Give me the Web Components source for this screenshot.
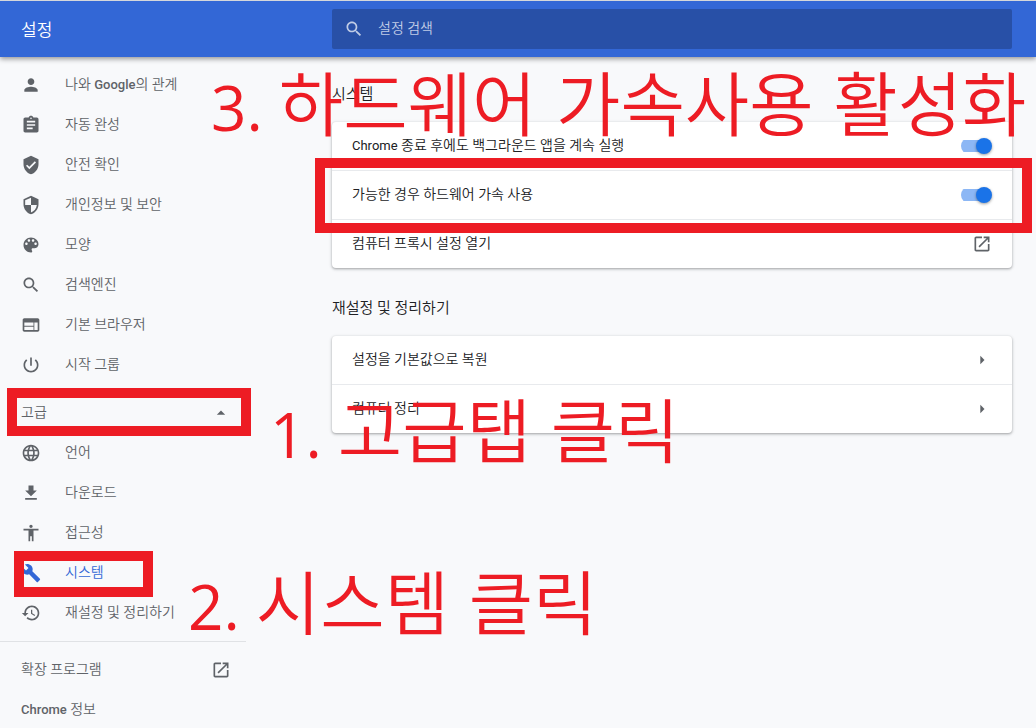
<!DOCTYPE html>
<html lang="ko">
<head>
    <meta charset="UTF-8">
    <title>설정</title>
    <style>
        body {
            margin: 0;
            background-color: #f8f9fb;
            color: #202124;
            font: 350 14px/20px Roboto, "Noto Sans CJK KR", sans-serif;
        }
    </style>
</head>
<body>
    <settings-page></settings-page>

    <script>
        const ICONS = {
            person: 'M12 12c2.21 0 4-1.79 4-4s-1.79-4-4-4-4 1.79-4 4 1.79 4 4 4zm0 2c-2.67 0-8 1.34-8 4v2h16v-2c0-2.66-5.33-4-8-4z',
            autofill: 'M19 3h-4.18C14.4 1.84 13.3 1 12 1c-1.3 0-2.4.84-2.82 2H5c-1.1 0-2 .9-2 2v14c0 1.1.9 2 2 2h14c1.1 0 2-.9 2-2V5c0-1.1-.9-2-2-2zm-7 0c.55 0 1 .45 1 1s-.45 1-1 1-1-.45-1-1 .45-1 1-1zm2 14H7v-2h7v2zm3-4H7v-2h10v2zm0-4H7V7h10v2z',
            safety: 'M12 1L3 5v6c0 5.55 3.84 10.74 9 12 5.16-1.26 9-6.45 9-12V5l-9-4zm-2 16l-4-4 1.41-1.41L10 14.17l6.59-6.59L18 9l-8 8z',
            privacy: 'M12 1L3 5v6c0 5.55 3.84 10.74 9 12 5.16-1.26 9-6.45 9-12V5l-9-4zm0 10.99h7c-.53 4.12-3.28 7.79-7 8.94V12H5V6.3l7-3.11v8.8z',
            palette: 'M12 3c-4.97 0-9 4.03-9 9s4.03 9 9 9c.83 0 1.5-.67 1.5-1.5 0-.39-.15-.74-.39-1.01-.23-.26-.38-.61-.38-.99 0-.83.67-1.5 1.5-1.5H16c2.76 0 5-2.24 5-5 0-4.42-4.03-8-9-8zm-5.5 9c-.83 0-1.5-.67-1.5-1.5S5.67 9 6.5 9 8 9.67 8 10.5 7.33 12 6.5 12zm3-4C8.67 8 8 7.33 8 6.5S8.67 5 9.5 5s1.5.67 1.5 1.5S10.33 8 9.5 8zm5 0c-.83 0-1.5-.67-1.5-1.5S13.67 5 14.5 5s1.5.67 1.5 1.5S15.33 8 14.5 8zm3 4c-.83 0-1.5-.67-1.5-1.5S16.67 9 17.5 9s1.5.67 1.5 1.5-.67 1.5-1.5 1.5z',
            search: 'M15.5 14h-.79l-.28-.27C15.41 12.59 16 11.11 16 9.5 16 5.91 13.09 3 9.5 3S3 5.91 3 9.5 5.91 16 9.5 16c1.61 0 3.09-.59 4.23-1.57l.27.28v.79l5 4.99L20.49 19l-4.99-5zm-6 0C7.01 14 5 11.99 5 9.5S7.01 5 9.5 5 14 7.01 14 9.5 11.99 14 9.5 14z',
            browser: 'M20 4H4c-1.1 0-1.99.9-1.99 2L2 18c0 1.1.9 2 2 2h16c1.1 0 2-.9 2-2V6c0-1.1-.9-2-2-2zm-5 14H4v-4h11v4zm0-5H4V9h11v4zm5 5h-4V9h4v9z',
            power: 'M13 3h-2v10h2V3zm4.83 2.17l-1.42 1.42C17.99 7.86 19 9.81 19 12c0 3.87-3.13 7-7 7s-7-3.13-7-7c0-2.19 1.01-4.14 2.58-5.42L6.17 5.17C4.23 6.82 3 9.26 3 12c0 4.97 4.03 9 9 9s9-4.03 9-9c0-2.74-1.23-5.18-3.17-6.83z',
            language: 'M11.99 2C6.47 2 2 6.48 2 12s4.47 10 9.99 10C17.52 22 22 17.52 22 12S17.52 2 11.99 2zm6.93 6h-2.95c-.32-1.25-.78-2.45-1.38-3.56 1.84.63 3.37 1.91 4.33 3.56zM12 4.04c.83 1.2 1.48 2.53 1.91 3.96h-3.82c.43-1.43 1.08-2.76 1.91-3.96zM4.26 14C4.1 13.36 4 12.69 4 12s.1-1.36.26-2h3.38c-.08.66-.14 1.32-.14 2s.06 1.34.14 2H4.26zm.82 2h2.95c.32 1.25.78 2.45 1.38 3.56-1.84-.63-3.37-1.9-4.33-3.56zm2.95-8H5.08c.96-1.66 2.49-2.93 4.33-3.56C8.81 5.55 8.35 6.75 8.03 8zM12 19.96c-.83-1.2-1.48-2.53-1.91-3.96h3.82c-.43 1.43-1.08 2.76-1.91 3.96zM14.34 14H9.66c-.09-.66-.16-1.32-.16-2s.07-1.35.16-2h4.68c.09.65.16 1.32.16 2s-.07 1.34-.16 2zm.25 5.56c.6-1.11 1.06-2.31 1.38-3.56h2.95c-.96 1.65-2.49 2.93-4.33 3.56zM16.36 14c.08-.66.14-1.32.14-2s-.06-1.34-.14-2h3.38c.16.64.26 1.31.26 2s-.1 1.36-.26 2h-3.38z',
            download: 'M19 9h-4V3H9v6H5l7 7 7-7zM5 18v2h14v-2H5z',
            accessibility: 'M12 2c1.1 0 2 .9 2 2s-.9 2-2 2-2-.9-2-2 .9-2 2-2zm9 7h-6v13h-2v-6h-2v6H9V9H3V7h18v2z',
            build: 'M22.7 19l-9.1-9.1c.9-2.3.4-5-1.5-6.9-2-2-5-2.4-7.4-1.3L9 6 6 9 1.6 4.7C.4 7.1.9 10.1 2.9 12.1c1.9 1.9 4.6 2.4 6.9 1.5l9.1 9.1c.4.4 1 .4 1.4 0l2.3-2.3c.5-.4.5-1.1.1-1.4z',
            restore: 'M13 3c-4.97 0-9 4.03-9 9H1l3.89 3.89.07.14L9 12H6c0-3.87 3.13-7 7-7s7 3.13 7 7-3.13 7-7 7c-1.93 0-3.68-.79-4.94-2.06l-1.42 1.42C8.27 19.99 10.51 21 13 21c4.97 0 9-4.03 9-9s-4.03-9-9-9zm-1 5v5l4.28 2.54.72-1.21-3.5-2.08V8H12z',
            open: 'M19 19H5V5h7V3H5c-1.11 0-2 .9-2 2v14c0 1.1.89 2 2 2h14c1.1 0 2-.9 2-2v-7h-2v7zM14 3v2h3.59l-9.83 9.83 1.41 1.41L19 6.41V10h2V3h-7z',
            up: 'M7 14l5-5 5 5z',
            right: 'M10 7l5 5-5 5z'
        };

        function attach(host, html) {
            const template = document.createElement('template');
            template.innerHTML = html;
            host.attachShadow({mode: 'open'}).append(template.content.cloneNode(true));
        }

        class SettingsIcon extends HTMLElement {
            constructor() {
                super();
                attach(this, `
                    <style>
                        :host { display: block; flex: none; width: 20px; height: 20px; }
                        svg { display: block; width: 100%; height: 100%; fill: currentColor; }
                    </style>
                    <svg viewBox="0 0 24 24" aria-hidden="true"><path d="${ICONS[this.getAttribute('name')]}"/></svg>`);
            }
        }

        class SettingsToolbar extends HTMLElement {
            constructor() {
                super();
                attach(this, `
                    <style>
                        :host {
                            display: grid;
                            grid-template-columns: 332px 1fr;
                            align-items: center;
                            height: 56px;
                            padding-right: 24px;
                            border-top: 1px solid #d5d7db;
                            background-color: #3367d6;
                            box-shadow: 0 2px 5px rgba(0, 0, 0, .4);
                            color: #fff;
                            position: relative;
                        }
                        h1 { margin: 0; padding: 2px 0 0 21px; font-size: 17px; font-weight: inherit; line-height: 24px; }
                        label {
                            display: flex;
                            align-items: center;
                            gap: 14px;
                            height: 40px;
                            padding-left: 12px;
                            border-radius: 2px;
                            background-color: #2850a7;
                            color: #c0cce6;
                        }
                        input {
                            flex: 1;
                            min-width: 0;
                            padding: 0 0 2px;
                            border: 0;
                            outline: 0;
                            background: none;
                            color: inherit;
                            font: inherit;
                        }
                        input::placeholder { color: inherit; opacity: 1; }
                    </style>
                    <h1>설정</h1>
                    <label>
                        <settings-icon name="search"></settings-icon>
                        <input type="search" placeholder="설정 검색" aria-label="설정 검색">
                    </label>`);
            }
        }

        class MenuItem extends HTMLElement {
            constructor() {
                super();
                const icon = this.getAttribute('icon');
                const end = this.getAttribute('end');
                attach(this, `
                    <style>
                        :host { display: block; color: #5f6368; }
                        :host([selected]) { color: #3367d6; }
                        a {
                            display: flex;
                            align-items: center;
                            height: 40px;
                            padding: 0 15px 0 21px;
                            color: inherit;
                            text-decoration: none;
                        }
                        span { flex: 1; padding-bottom: 2px; }
                        settings-icon + span { padding-left: 24px; }
                        ::slotted(b) { font-size: 13px; font-weight: 500; }
                    </style>
                    <a href="#">
                        ${icon ? `<settings-icon name="${icon}"></settings-icon>` : ''}
                        <span><slot></slot></span>
                        ${end ? `<settings-icon name="${end}"></settings-icon>` : ''}
                    </a>`);
            }
        }

        class SettingsMenu extends HTMLElement {
            constructor() {
                super();
                attach(this, `
                    <style>
                        :host { display: block; width: 246px; padding-top: 8px; }
                        button {
                            display: flex;
                            align-items: center;
                            justify-content: space-between;
                            width: 100%;
                            height: 40px;
                            margin: 8px 0 0;
                            padding: 0 15px 0 21px;
                            border: 0;
                            background: none;
                            color: #5f6368;
                            font: inherit;
                        }
                        button span { padding-bottom: 2px; }
                        hr { margin: 8px 0; border: 0; border-top: 1px solid #e0e2e5; }
                    </style>
                    <nav>
                        <menu-item icon="person">나와 <b>Google</b>의 관계</menu-item>
                        <menu-item icon="autofill">자동 완성</menu-item>
                        <menu-item icon="safety">안전 확인</menu-item>
                        <menu-item icon="privacy">개인정보 및 보안</menu-item>
                        <menu-item icon="palette">모양</menu-item>
                        <menu-item icon="search">검색엔진</menu-item>
                        <menu-item icon="browser">기본 브라우저</menu-item>
                        <menu-item icon="power">시작 그룹</menu-item>
                        <button type="button" aria-expanded="true"><span>고급</span> <settings-icon name="up"></settings-icon></button>
                        <menu-item icon="language">언어</menu-item>
                        <menu-item icon="download">다운로드</menu-item>
                        <menu-item icon="accessibility">접근성</menu-item>
                        <menu-item icon="build" selected>시스템</menu-item>
                        <menu-item icon="restore">재설정 및 정리하기</menu-item>
                        <hr>
                        <menu-item end="open">확장 프로그램</menu-item>
                        <menu-item><b>Chrome</b> 정보</menu-item>
                    </nav>`);
            }
        }

        class SettingsSection extends HTMLElement {
            constructor() {
                super();
                attach(this, `
                    <style>
                        :host { display: block; }
                        h2 { margin: 0 0 16px; font-size: 15px; font-weight: inherit; line-height: 24px; }
                        div {
                            border-radius: 4px;
                            background-color: #fff;
                            box-shadow: 0 1px 2px rgba(60, 64, 67, .3), 0 1px 3px 1px rgba(60, 64, 67, .15);
                        }
                        ::slotted(:not(:first-child)) { border-top: 1px solid #e8eaed; }
                    </style>
                    <h2>${this.getAttribute('heading')}</h2>
                    <div><slot></slot></div>`);
            }
        }

        const ROW_STYLE = `
            :host { display: block; }
            .row {
                display: flex;
                align-items: center;
                justify-content: space-between;
                box-sizing: border-box;
                width: 100%;
                height: 48px;
                margin: 0;
                padding: 0 20px;
                border: 0;
                background: none;
                color: inherit;
                font: inherit;
                text-align: left;
            }
            .text { padding-bottom: 2px; }
            ::slotted(b) { font-size: 13px; font-weight: 400; }
            settings-icon { color: #5f6368; }`;

        class ToggleRow extends HTMLElement {
            constructor() {
                super();
                attach(this, `
                    <style>
                        ${ROW_STYLE}
                        input {
                            appearance: none;
                            display: flex;
                            align-items: center;
                            justify-content: flex-end;
                            width: 31px;
                            height: 16px;
                            margin: 0;
                            background: linear-gradient(#8cb7f5, #8cb7f5) left / 28px 12px no-repeat;
                            border-radius: 8px;
                        }
                        input::before {
                            content: "";
                            width: 16px;
                            height: 16px;
                            border-radius: 50%;
                            background-color: #1a73e8;
                            box-shadow: 0 1px 3px rgba(0, 0, 0, .4);
                        }
                    </style>
                    <label class="row"><span class="text"><slot></slot></span><input type="checkbox" role="switch" checked></label>`);
            }
        }

        class LinkRow extends HTMLElement {
            constructor() {
                super();
                attach(this, `
                    <style>${ROW_STYLE}</style>
                    <button type="button" class="row">
                        <span class="text"><slot></slot></span>
                        <settings-icon name="${this.getAttribute('icon')}"></settings-icon>
                    </button>`);
            }
        }

        // Red marker frame, placed freely over the page
        class MarkFrame extends HTMLElement {
            constructor() {
                super();
                attach(this, `
                    <style>
                        :host {
                            position: absolute;
                            box-sizing: border-box;
                            border: 10px solid #ed1c24;
                            pointer-events: none;
                        }
                    </style>`);
            }
        }

        class MarkNote extends HTMLElement {
            constructor() {
                super();
                attach(this, `
                    <style>
                        :host {
                            position: absolute;
                            color: #ed1c24;
                            font: 350 70px/80px "Noto Sans CJK KR", sans-serif;
                            white-space: nowrap;
                            pointer-events: none;
                        }
                        ::slotted(b) { font: 400 62px/80px "Open Sans", sans-serif; }
                    </style>
                    <slot></slot>`);
            }
        }

        class SettingsPage extends HTMLElement {
            constructor() {
                super();
                attach(this, `
                    <style>
                        :host { display: block; position: relative; height: 100vh; overflow: hidden; }
                        .columns { display: grid; grid-template-columns: 332px 1fr; padding-right: 24px; }
                        main { display: flex; flex-direction: column; gap: 28px; padding-top: 25px; }
                        .frame-1 { left: 7px; top: 388px; width: 244px; height: 48px; }
                        .frame-2 { left: 14px; top: 551px; width: 139px; height: 46px; }
                        .frame-3 { left: 315px; top: 158px; right: 4px; height: 75px; }
                        .note-1 { left: 270px; top: 388px; }
                        .note-2 { left: 188px; top: 560px; }
                        .note-3 { left: 211px; top: 61px; }
                    </style>
                    <settings-toolbar></settings-toolbar>
                    <div class="columns">
                        <settings-menu></settings-menu>
                        <main>
                            <settings-section heading="시스템">
                                <toggle-row><b>Chrome</b> 종료 후에도 백그라운드 앱을 계속 실행</toggle-row>
                                <toggle-row>가능한 경우 하드웨어 가속 사용</toggle-row>
                                <link-row icon="open">컴퓨터 프록시 설정 열기</link-row>
                            </settings-section>
                            <settings-section heading="재설정 및 정리하기">
                                <link-row icon="right">설정을 기본값으로 복원</link-row>
                                <link-row icon="right">컴퓨터 정리</link-row>
                            </settings-section>
                        </main>
                    </div>
                    <mark-frame class="frame-1"></mark-frame>
                    <mark-frame class="frame-2"></mark-frame>
                    <mark-frame class="frame-3"></mark-frame>
                    <mark-note class="note-1"><b>1. </b>고급탭 클릭</mark-note>
                    <mark-note class="note-2"><b>2. </b>시스템 클릭</mark-note>
                    <mark-note class="note-3"><b>3. </b>하드웨어 가속사용 활성화</mark-note>`);
            }
        }

        customElements.define('settings-icon', SettingsIcon);
        customElements.define('settings-toolbar', SettingsToolbar);
        customElements.define('menu-item', MenuItem);
        customElements.define('settings-menu', SettingsMenu);
        customElements.define('settings-section', SettingsSection);
        customElements.define('toggle-row', ToggleRow);
        customElements.define('link-row', LinkRow);
        customElements.define('mark-frame', MarkFrame);
        customElements.define('mark-note', MarkNote);
        customElements.define('settings-page', SettingsPage);
    </script>
</body>
</html>
